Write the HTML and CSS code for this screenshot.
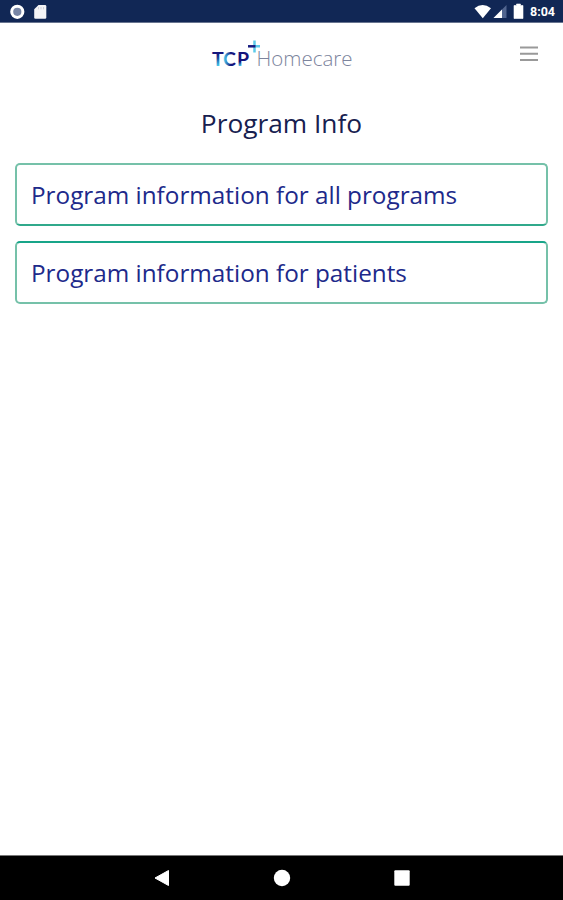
FILE: index.html
```
<!DOCTYPE html>
<html lang="en">
  <head>
    <title>Program Info</title>
    <meta charset="UTF-8">
    <link rel="stylesheet" href="styles.css">
  </head>

  <body>
	<!--Android status bar-->
	<div class="statusbar">
		<svg class="status-left" width="60" height="23" viewBox="0 0 60 23">
			<circle cx="17.3" cy="11.8" r="5.6" fill="#7785a5" stroke="#fff" stroke-width="3"/>
			<path d="M38.5 5H45q1.3 0 1.3 1.3V17.500q0 1.300-1.300 1.300H35.500q-1.300 0-1.300-1.300V9.300z" fill="#f4f4f6"/>
			<path d="M38.500 7v2.300M41 7v2.300M43.500 7v2.300" stroke="#d0d2da"/>
		</svg>
		<svg class="status-right" width="56" height="23" viewBox="0 0 56 23">
			<path d="M1.500 8.300Q9.500 1.800 18 8.300L9.800 18.200z" fill="#fff"/>
			<path d="M33.500 5v13H20.500z" fill="#51658f"/>
			<path d="M29 9.500V18h-8.500z" fill="#fff"/>
			<path d="M43.500 4h4v1.500h2.500v13H41v-13h2.500z" fill="#fff" stroke="#fff" stroke-width=".6"/>
		</svg>
		<span class="clock">8:04</span>
	</div>

	<header class="header">
		<svg class="logo" width="144" height="34" viewBox="0 0 144 34">
			<defs>
				<linearGradient id="tcp" gradientUnits="userSpaceOnUse" x1="0" y1="14" x2="0" y2="29">
					<stop offset=".15" stop-color="#15157c"/>
					<stop offset=".5" stop-color="#1d4f9f"/>
					<stop offset=".7" stop-color="#2b86c4"/>
					<stop offset="1" stop-color="#4cc9ea"/>
				</linearGradient>
				<linearGradient id="tcp-c" x1="0" x2="1">
					<stop offset=".1" stop-color="#4cc9ea"/>
					<stop offset=".6" stop-color="#15157c"/>
				</linearGradient>
				<linearGradient id="tcp-p" gradientUnits="userSpaceOnUse" x1="0" y1="14" x2="0" y2="29">
					<stop offset=".7" stop-color="#15157c"/>
					<stop offset="1" stop-color="#4cc9ea"/>
				</linearGradient>
			</defs>
			<text class="logo-tcp" x="2" y="29" fill="url(#tcp)">T</text>
			<text class="logo-tcp" x="13" y="29" fill="url(#tcp-c)">C</text>
			<text class="logo-tcp" x="27" y="29" fill="url(#tcp-p)">P</text>
			<path d="M44.500 3.500v12M44 9.300h6" stroke="#5ccbea" stroke-width="2.500"/>
			<path d="M38 9.300h7.500" stroke="#171c80" stroke-width="2.500"/>
			<text class="logo-name" x="46.500" y="29" textLength="96" lengthAdjust="spacingAndGlyphs">Homecare</text>
		</svg>
		<svg class="menu" width="18" height="16" viewBox="0 0 18 16">
			<path d="M0 1.500h18M0 7.800h18M0 14.100h18" stroke="#999" stroke-width="2"/>
		</svg>
	</header>

	<main class="content">
		<h1>Program Info</h1>
		<a class="program program-all">Program information for all programs</a>
		<a class="program program-patients">Program information for patients</a>
	</main>

	<!--Android navigation buttons-->
	<nav class="navbar">
		<svg width="16" height="18" viewBox="0 0 16 18"><path d="M1 9L14.500 1.500v15z" fill="#fff" stroke="#fff" stroke-linejoin="round"/></svg>
		<svg width="18" height="18" viewBox="0 0 18 18"><circle cx="9" cy="9" r="8.200" fill="#fff"/></svg>
		<svg width="16" height="18" viewBox="0 0 16 18"><rect x=".3" y="1.300" width="15.400" height="15.400" rx="1" fill="#fff"/></svg>
	</nav>
  </body>
</html>
```
FILE: styles.css
```
* {
	box-sizing: border-box;
}
body {
	margin: 0;
	height: 900px;
	display: flex;
	flex-direction: column;
	background-color: #fff;
	font-family: "Open Sans", sans-serif;
}
svg {
	display: block;
}
.statusbar {
	height: 23px;
	display: flex;
	align-items: center;
	background-color: #112755;
	border-bottom: 1px solid #687590;
}
.status-right {
	margin-left: auto;
}
.clock {
	width: 34px;
	padding-left: 1px;
	color: #fff;
	font: bold 12.5px/23px Roboto, sans-serif;
	padding-top: 1px;
}
.header {
	height: 63px;
	padding: 14px 25px 0 210px;
	display: flex;
	justify-content: space-between;
}
.menu {
	margin-top: 9px;
}
.logo-tcp {
	font: bold 19.5px Lato, sans-serif;
}
.logo-name {
	font: 300 19.5px "Open Sans", sans-serif;
	fill: #7c849d;
}
.content {
	flex: 1;
	padding: 20px 15px 0 15px;
}
h1 {
	margin: 0 0 22px 0;
	color: #17204f;
	font-size: 26.3px;
	font-weight: normal;
	line-height: 35px;
	text-align: center;
}
.program {
	display: block;
	height: 63px;
	margin-bottom: 15px;
	padding-left: 14px;
	border: 2px solid #75c1a9;
	border-radius: 5px;
	color: #20298a;
	font-size: 24.3px;
	line-height: 59px;
}
.program-all {
	border-bottom-color: #30a98b;
}
.program-patients {
	border-top-color: #18a589;
}
.navbar {
	height: 45px;
	display: flex;
	justify-content: center;
	align-items: center;
	gap: 103px;
	background-color: #000;
	border-top: 1px solid #777;
}
```
